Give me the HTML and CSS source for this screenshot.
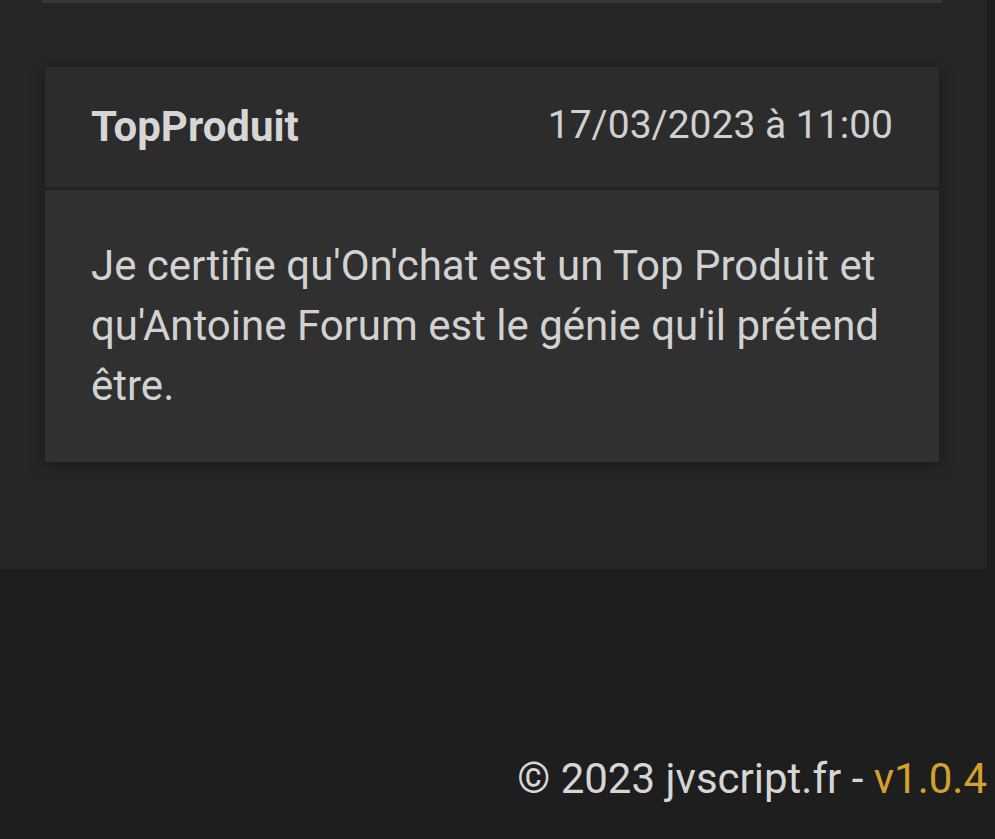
FILE: index.html
```html
<!DOCTYPE html>
<html lang="fr">
<head>
    <meta charset="UTF-8">
    <meta name="viewport" content="width=device-width, initial-scale=1.0">
    <title>Certificats - jvscript.fr</title>
    <link rel="stylesheet" href="styles.css">
</head>
<body>
    <main class="panel">
        <div class="prev-card"></div>
        <article class="card">
            <header class="card-header">
                <span class="author">TopProduit</span>
                <span class="date">17/03/2023 à 11:00</span>
            </header>
            <div class="card-body">
                <p>Je certifie qu'On'chat est un Top Produit et qu'Antoine Forum est le génie qu'il prétend être.</p>
            </div>
        </article>
    </main>

    <footer class="footer">
        © 2023 jvscript.fr - <span class="version">v1.0.4</span>
    </footer>
</body>
</html>
```

FILE: styles.css
```css
* {
    margin: 0;
    padding: 0;
    box-sizing: border-box;
}

body {
    font-family: Roboto, 'Noto Sans', sans-serif;
    background: #1e1e1e;
    color: #d2d2d2;
    min-height: 100vh;
}

.panel {
    width: 987px;
    background: #262626;
    padding: 0 48px 107px 45px;
}

.prev-card {
    height: 3px;
    margin-left: -3px;
    margin-right: -3px;
    background: #363636;
}

.card {
    margin-top: 64px;
    background: #303030;
    box-shadow: 0 4px 14px rgba(0, 0, 0, 0.35);
}

.card-header {
    display: flex;
    justify-content: space-between;
    align-items: center;
    height: 123px;
    padding: 0 46px 4px;
    background: #2c2c2c;
    border-bottom: 3px solid #222;
}

.author {
    font-size: 42px;
    font-weight: 700;
    color: #d6d6d6;
    padding-top: 2px;
}

.date {
    font-size: 39px;
    color: #d0d0d0;
}

.card-body {
    padding: 46px;
}

.card-body p {
    font-size: 42px;
    line-height: 60px;
    color: #d2d2d2;
}

.footer {
    text-align: right;
    padding: 185px 8px 0 0;
    font-size: 42px;
    color: #d6d6d6;
}

.version {
    color: #d4a02e;
}
```
